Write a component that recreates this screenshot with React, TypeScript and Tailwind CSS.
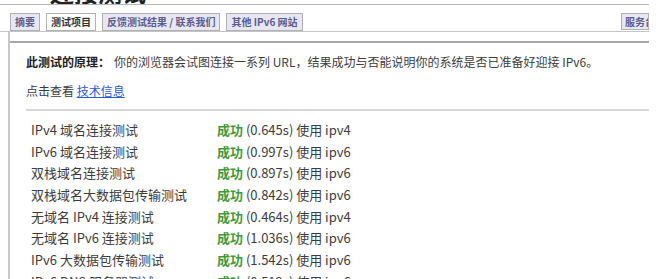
const rows = [
  { name: 'IPv4 域名连接测试', time: '0.645s', via: 'ipv4' },
  { name: 'IPv6 域名连接测试', time: '0.997s', via: 'ipv6' },
  { name: '双栈域名连接测试', time: '0.897s', via: 'ipv6' },
  { name: '双栈域名大数据包传输测试', time: '0.842s', via: 'ipv6' },
  { name: '无域名 IPv4 连接测试', time: '0.464s', via: 'ipv4' },
  { name: '无域名 IPv6 连接测试', time: '1.036s', via: 'ipv6' },
  { name: 'IPv6 大数据包传输测试', time: '1.542s', via: 'ipv6' },
  { name: 'IPv6 DNS 服务器测试', time: '0.512s', via: 'ipv6' },
];

const tabs = [
  { label: '摘要', active: false },
  { label: '测试项目', active: true },
  { label: '反馈测试结果 / 联系我们', active: false },
  { label: '其他 IPv6 网站', active: false },
];

export default function App() {
  return (
    <div className="w-[660px] h-[279px] overflow-hidden bg-white text-[#3c3c3c] font-['Noto_Sans_CJK_SC','Noto_Sans',sans-serif]">
      <div className="w-[649px] overflow-hidden">
        {/* page heading, scrolled mostly out of view */}
        <div className="h-[4px] overflow-hidden pl-[50px]">
          <div className="-mt-[22px] text-[24px] leading-[28px] font-bold text-[#222]">连接测试</div>
        </div>
        <div className="border-t border-[#b8b8b8]" />

        {/* tab bar */}
        <div className="flex items-end justify-between h-[27px] pl-[10px] border-b border-[#c4c4c4]">
          <div className="flex gap-[6px]">
            {tabs.map((t) => (
              <div
                key={t.label}
                className={`h-[18px] px-[4px] border border-[#b0b0b0] text-[10px] leading-[16px] font-bold ${
                  t.active ? 'bg-white text-[#333]' : 'bg-[#e7e7f3] text-[#5b5b8c]'
                }`}
              >
                {t.label}
              </div>
            ))}
          </div>
          <div className="h-[17px] w-[28px] mb-[1px] overflow-hidden whitespace-nowrap px-[3px] border border-[#b0b0b0] bg-[#e7e7f3] text-[10px] leading-[15px] font-bold text-[#5b5b8c]">
            服务台
          </div>
        </div>

        {/* content box */}
        <div className="ml-[8px] border-l-2 border-[#c6c6c6] pt-[9px]">
          <div className="border-t-2 border-[#a8a8a8]" />
          <div className="pl-[16px] pt-[9px] text-[12px]">
            <p className="leading-[20px]">
              <span className="font-bold text-[#222]">此测试的原理：</span>
              <span className="ml-[4px]">你的浏览器会试图连接一系列 URL，结果成功与否能说明你的系统是否已准备好迎接 IPv6。</span>
            </p>
            <p className="mt-[9px] leading-[20px]">
              点击查看 <a className="text-[#2a5bd7] underline">技术信息</a>
            </p>
          </div>
          <div className="ml-[16px] mt-[8px] border-t-2 border-[#d6d6d6]" />
          <div className="pl-[21px] pt-[8px] text-[13px]">
            {rows.map((r) => (
              <div key={r.name} className="flex h-[21.7px] items-center leading-[20px]">
                <div className="w-[186px] shrink-0">{r.name}</div>
                <div>
                  <span className="text-[#3d9a3d] font-bold">成功</span> ({r.time}) 使用 {r.via}
                </div>
              </div>
            ))}
          </div>
        </div>
      </div>
    </div>
  );
}
